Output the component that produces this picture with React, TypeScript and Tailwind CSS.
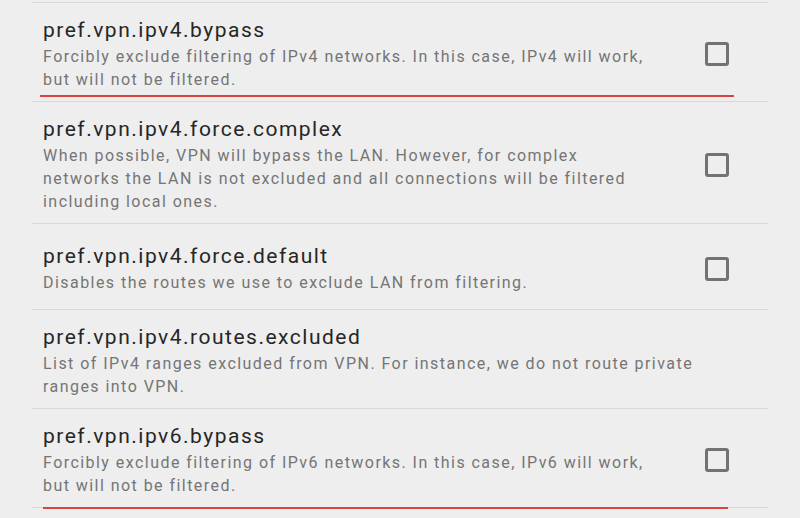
const prefs = [
  {
    key: 'pref.vpn.ipv4.bypass',
    summary: 'Forcibly exclude filtering of IPv4 networks. In this case, IPv4 will work, but will not be filtered.',
    checkbox: true,
    mark: 'left-[8px] right-[34px] bottom-[4px]',
  },
  {
    key: 'pref.vpn.ipv4.force.complex',
    summary: 'When possible, VPN will bypass the LAN. However, for complex networks the LAN is not excluded and all connections will be filtered including local ones.',
    checkbox: true,
  },
  {
    key: 'pref.vpn.ipv4.force.default',
    summary: 'Disables the routes we use to exclude LAN from filtering.',
    checkbox: true,
  },
  {
    key: 'pref.vpn.ipv4.routes.excluded',
    summary: 'List of IPv4 ranges excluded from VPN. For instance, we do not route private ranges into VPN.',
    checkbox: false,
  },
  {
    key: 'pref.vpn.ipv6.bypass',
    summary: 'Forcibly exclude filtering of IPv6 networks. In this case, IPv6 will work, but will not be filtered.',
    checkbox: true,
    mark: 'left-[11px] right-[40px] -bottom-[2px]',
  },
]

function Checkbox() {
  return <div className="w-[24px] h-[24px] border-[3px] border-[#727272] rounded-[3px] shrink-0" />
}

export default function App() {
  return (
    <div className="w-[800px] h-[518px] bg-[#eeeeee] overflow-hidden" style={{ fontFamily: 'Roboto, "Noto Sans", sans-serif' }}>
      <div className="h-[2px]" />
      <div className="mx-[32px]">
        {prefs.map((p) => (
          <div key={p.key}>
            <div className="h-px bg-[#d8d8d8]" />
            <div className="relative flex items-center min-h-[85px] pt-[14px] pb-[10px] pl-[11px] pr-[39px]">
              <div className="flex-1 min-w-0">
                <div className="text-[21px] leading-[27px] mb-px tracking-[1.5px] text-[#262626]">{p.key}</div>
                <div className={p.checkbox ? 'text-[16px] leading-[23px] tracking-[1.45px] text-[#757575] pr-[50px]' : 'text-[16px] leading-[23px] tracking-[1.45px] text-[#757575]'}>
                  {p.summary}
                </div>
              </div>
              {p.checkbox && <Checkbox />}
              {p.mark && <div className={'absolute h-[2px] bg-[#d9443e] ' + p.mark} />}
            </div>
          </div>
        ))}
        <div className="h-px bg-[#d8d8d8]" />
      </div>
    </div>
  )
}
